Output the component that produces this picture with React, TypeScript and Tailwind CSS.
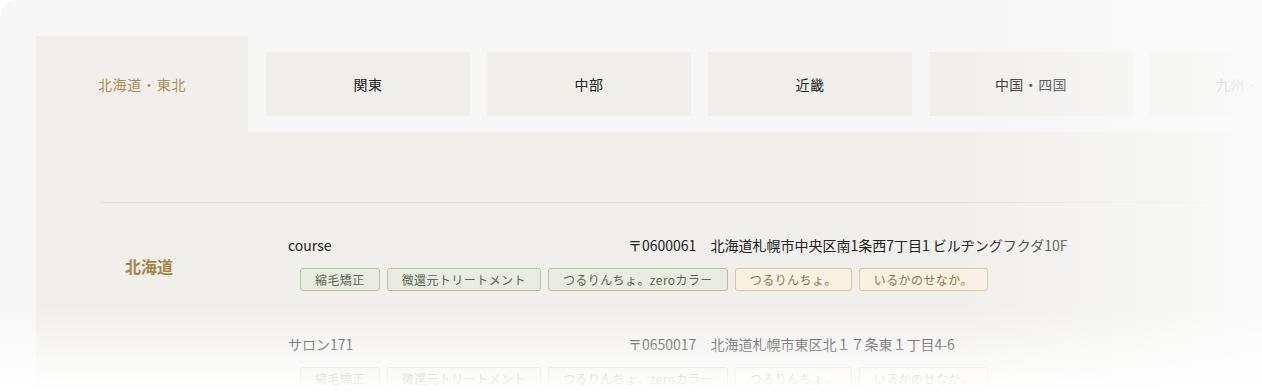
import React from 'react'

const areas = ['関東', '中部', '近畿', '中国・四国', '九州・沖縄']

const greenTags = ['縮毛矯正', '微還元トリートメント', 'つるりんちょ。zeroカラー']
const creamTags = ['つるりんちょ。', 'いるかのせなか。']

const salons = [
  { name: 'course', address: '〒0600061　北海道札幌市中央区南1条西7丁目1 ビルヂングフクダ10F' },
  { name: 'サロン171', address: '〒0650017　北海道札幌市東区北１７条東１丁目4-6' },
]

function Tag({ label, cream }: { label: string; cream?: boolean }) {
  return (
    <span
      className={
        cream
          ? 'rounded-[3px] border border-[#d9c69b] bg-[#f9f2e3] px-[14px] text-[12px] leading-[21px] tracking-[0.035em] text-[#8c7548]'
          : 'rounded-[3px] border border-[#b7bfa5] bg-[#e9ece2] px-[14px] text-[12px] leading-[21px] tracking-[0.035em] text-[#5b6650]'
      }
    >
      {label}
    </span>
  )
}

function Salon({ name, address, first }: { name: string; address: string; first?: boolean }) {
  return (
    <div className={first ? '' : 'mt-[43px]'}>
      <div className="flex text-[14px] leading-[20px] text-[#222]">
        <span className="w-[340px] shrink-0">{name}</span>
        <span className="whitespace-nowrap">{address}</span>
      </div>
      <div className="ml-[12px] mt-[13px] flex gap-[7px]">
        {greenTags.map((t) => (
          <Tag key={t} label={t} />
        ))}
        {creamTags.map((t) => (
          <Tag key={t} label={t} cream />
        ))}
      </div>
    </div>
  )
}

export default function App() {
  return (
    <div className="relative h-[392px] w-[1262px] overflow-hidden bg-white font-['Noto_Sans_CJK_JP',sans-serif]">
      <div className="h-full rounded-tl-[18px] bg-[#f7f7f8] pl-[36px] pt-[36px]">
        <div className="flex items-start">
          <div className="flex h-[96px] w-[212px] shrink-0 items-center justify-center bg-[#f0efeb] text-[14px] tracking-[0.05em] text-[#b08d57]">
            北海道・東北
          </div>
          <div className="flex shrink-0 gap-[17px] pl-[18px] pt-[16px]">
            {areas.map((a) => (
              <div
                key={a}
                className="flex h-[64px] w-[204px] shrink-0 items-center justify-center bg-[#f0efeb] text-[14px] tracking-[0.03em] text-[#222]"
              >
                {a}
              </div>
            ))}
          </div>
        </div>
        <div className="h-[300px] bg-[#f0efeb] pl-[66px] pr-[52px] pt-[70px]">
          <div className="flex border-t border-[#e1e0db] pt-[32px]">
            <div className="w-[186px] shrink-0 pl-[23px]">
              <div className="mt-[19px] text-[16px] font-bold leading-[24px] text-[#a98448]">北海道</div>
            </div>
            <div>
              {salons.map((s, i) => (
                <Salon key={s.name} name={s.name} address={s.address} first={i === 0} />
              ))}
            </div>
          </div>
        </div>
      </div>
      {/* fade overlays */}
      <div className="pointer-events-none absolute inset-0 bg-linear-to-r from-[#fafafa00] from-[76%] to-[#fafafa] to-[100%]" />
      <div className="pointer-events-none absolute inset-0 bg-linear-to-b from-[#ffffff00] from-[78%] to-white to-[100%]" />
    </div>
  )
}
